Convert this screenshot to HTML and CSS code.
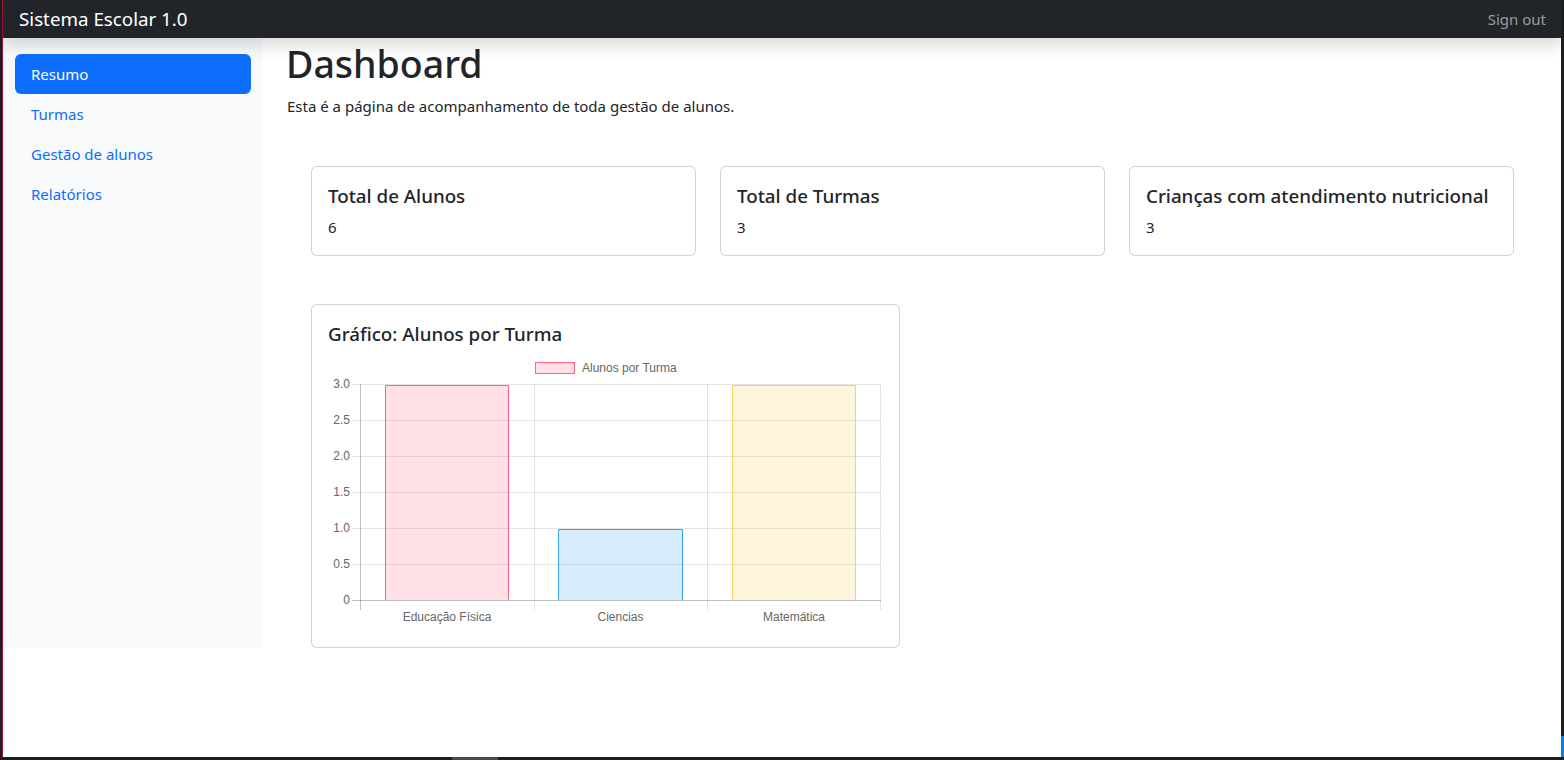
FILE: index.html
```html
<!DOCTYPE html>
<html lang="pt-br">
<head>
<meta charset="utf-8">
<title>Sistema Escolar 1.0</title>
<link rel="stylesheet" href="styles.css">
</head>
<body>
<div class="frame">
  <header class="navbar">
    <a class="brand" href="#">Sistema Escolar 1.0</a>
    <a class="signout" href="#">Sign out</a>
  </header>
  <div class="layout">
    <nav class="sidebar">
      <ul class="nav">
        <li><a class="nav-link active" href="#">Resumo</a></li>
        <li><a class="nav-link" href="#">Turmas</a></li>
        <li><a class="nav-link" href="#">Gestão de alunos</a></li>
        <li><a class="nav-link" href="#">Relatórios</a></li>
      </ul>
    </nav>
    <main class="main">
      <h1 class="title">Dashboard</h1>
      <p class="lead">Esta é a página de acompanhamento de toda gestão de alunos.</p>
      <div class="content">
        <div class="cards">
          <div class="card">
            <h5 class="card-title">Total de Alunos</h5>
            <p class="card-text">6</p>
          </div>
          <div class="card">
            <h5 class="card-title">Total de Turmas</h5>
            <p class="card-text">3</p>
          </div>
          <div class="card">
            <h5 class="card-title">Crianças com atendimento nutricional</h5>
            <p class="card-text">3</p>
          </div>
        </div>
        <div class="chart-row">
          <div class="card chart-card">
            <h5 class="card-title">Gráfico: Alunos por Turma</h5>
            <svg class="chart" width="555" height="278" viewBox="0 0 555 278">
              <!-- legend -->
              <rect x="207.5" y="9.5" width="39" height="11" fill="rgba(255,99,132,0.2)" stroke="rgb(255,99,132)" stroke-width="1"/>
              <text class="lbl" x="254" y="15" text-anchor="start">Alunos por Turma</text>
              <!-- grid -->
              <g stroke="rgba(0,0,0,0.1)" stroke-width="1">
                <line x1="24" y1="31.5" x2="553" y2="31.5"/>
                <line x1="24" y1="67.5" x2="553" y2="67.5"/>
                <line x1="24" y1="103.5" x2="553" y2="103.5"/>
                <line x1="24" y1="139.5" x2="553" y2="139.5"/>
                <line x1="24" y1="175.5" x2="553" y2="175.5"/>
                <line x1="24" y1="211.5" x2="553" y2="211.5"/>
                <line x1="206.5" y1="31" x2="206.5" y2="257"/>
                <line x1="379.5" y1="31" x2="379.5" y2="257"/>
                <line x1="552.5" y1="31" x2="552.5" y2="257"/>
              </g>
              <g stroke="rgba(0,0,0,0.25)" stroke-width="1">
                <line x1="24" y1="247.5" x2="553" y2="247.5"/>
                <line x1="32.5" y1="31" x2="32.5" y2="257"/>
              </g>
              <!-- bars -->
              <rect x="57" y="32" width="124" height="215" fill="rgba(255,99,132,0.2)"/>
              <path d="M57.5 247 V32.5 H180.5 V247" fill="none" stroke="rgb(255,99,132)" stroke-width="1"/>
              <rect x="230" y="176" width="125" height="71" fill="rgba(54,162,235,0.2)"/>
              <path d="M230.5 247 V176.5 H354.5 V247" fill="none" stroke="rgb(54,162,235)" stroke-width="1"/>
              <rect x="404" y="32" width="124" height="215" fill="rgba(255,206,86,0.2)"/>
              <path d="M404.5 247 V32.5 H527.5 V247" fill="none" stroke="rgb(255,206,86)" stroke-width="1"/>
              <!-- y labels -->
              <g class="lbl" text-anchor="end">
                <text x="22" y="31">3.0</text>
                <text x="22" y="67">2.5</text>
                <text x="22" y="103">2.0</text>
                <text x="22" y="139">1.5</text>
                <text x="22" y="175">1.0</text>
                <text x="22" y="211">0.5</text>
                <text x="22" y="247">0</text>
              </g>
              <g class="lbl" text-anchor="middle">
                <text x="119" y="264">Educação Física</text>
                <text x="292.5" y="264">Ciencias</text>
                <text x="466" y="264">Matemática</text>
              </g>
            </svg>
          </div>
        </div>
      </div>
    </main>
  </div>
  <span class="taskbar-mark"></span>
  <span class="edge-mark"></span>
</div>
</body>
</html>
```

FILE: styles.css
```css
* { box-sizing: border-box; }
html {
  background: #1e1e20;
  height: 100%;
}
body {
  margin: 0;
  height: 100%;
  padding: 0 3px 3px 2px;
  font-family: "Noto Sans", "Open Sans", "Liberation Sans", sans-serif;
  font-size: 15px;
  line-height: 24px;
  color: #212529;
}
.frame {
  position: relative;
  height: 100%;
  background: #fff;
  border-left: 1px solid #a3123c;
}
.navbar {
  position: relative;
  z-index: 2;
  height: 38px;
  background: #212529;
  display: flex;
  align-items: center;
  justify-content: space-between;
  box-shadow: 0 8px 16px rgba(0,0,0,0.15);
}
.brand {
  color: #fff;
  text-decoration: none;
  font-size: 18.75px;
  padding: 0 16px;
  line-height: 38px;
}
.signout {
  color: rgba(255,255,255,0.55);
  text-decoration: none;
  padding: 0 15px;
  line-height: 38px;
}
.layout {
  display: flex;
  align-items: stretch;
}
.sidebar {
  width: 259px;
  flex: none;
  background: #f8f9fa;
  padding: 16px 11px 0 12px;
}
.nav {
  list-style: none;
  margin: 0;
  padding: 0;
}
.nav-link {
  display: block;
  padding: 8px 16px;
  color: #0d6efd;
  text-decoration: none;
  border-radius: 6px;
}
.nav-link.active {
  background: #0d6efd;
  color: #fff;
}
.main {
  flex: 1;
  padding: 0 24px 0 24px;
}
.title {
  margin: 0 0 6px;
  padding-top: 2px;
  font-size: 37.5px;
  font-weight: 500;
  line-height: 48px;
}
.lead {
  margin: 0 0 16px;
  padding-left: 1px;
}
.content {
  padding: 32px 0 0 25px;
  width: 1228px;
}
.cards {
  display: grid;
  grid-template-columns: repeat(3, 385px);
  gap: 24px;
}
.card {
  border: 1px solid rgba(0,0,0,0.175);
  border-radius: 6px;
  padding: 16px;
  background: #fff;
}
.card-title {
  margin: 0 0 7px;
  padding-top: 1px;
  font-size: 18.75px;
  font-weight: 500;
  line-height: 24px;
  white-space: nowrap;
}
.card-text {
  margin: 0;
}
.chart-row {
  margin-top: 48px;
  display: flex;
}
.chart-card {
  width: 589px;
}
.chart {
  display: block;
}
.lbl, .lbl text {
  font-family: "Liberation Sans", Arial, sans-serif;
  font-size: 12px;
  fill: #666;
  dominant-baseline: central;
}
.taskbar-mark {
  position: absolute;
  left: 449px;
  bottom: -3px;
  width: 46px;
  height: 3px;
  background: #4a4a4c;
}
.edge-mark {
  position: absolute;
  right: -3px;
  bottom: 0;
  width: 3px;
  height: 21px;
  background: #0a84d8;
}
```
